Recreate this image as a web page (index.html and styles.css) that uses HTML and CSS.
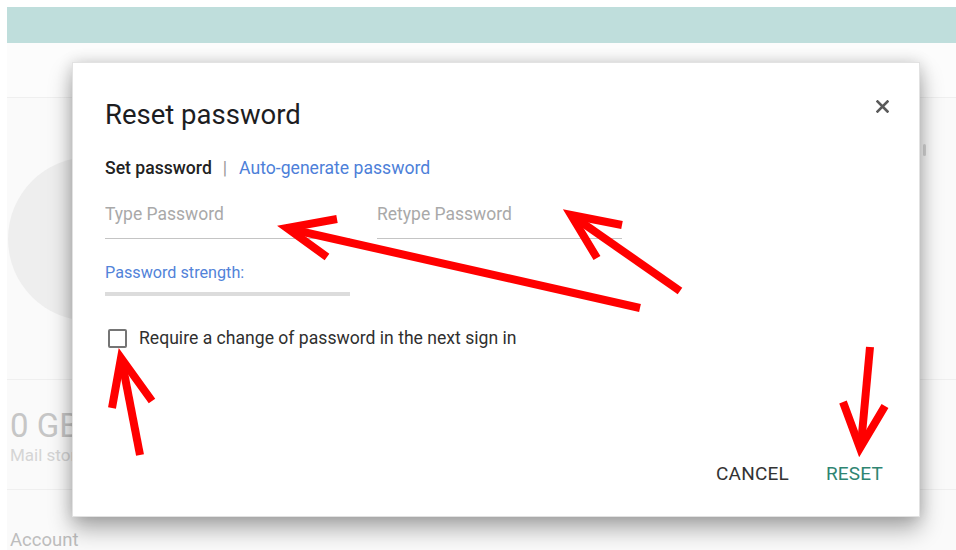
FILE: index.html
```html
<!DOCTYPE html>
<html lang="en">
<head>
<meta charset="utf-8">
<title>Reset password</title>
<link rel="stylesheet" href="styles.css">
</head>
<body>
<div class="page">
  <header class="topbar"></header>
  <main class="content">
    <section class="band band-top"></section>
    <section class="band band-profile">
      <div class="avatar"></div>
      <span class="more-dot"></span>
    </section>
    <section class="band band-storage">
      <div class="storage-value">0 GB</div>
      <div class="storage-label">Mail storage</div>
    </section>
    <section class="band band-account">
      <div class="account-title">Account</div>
    </section>
  </main>

  <div class="dialog" role="dialog" aria-labelledby="dlg-title">
    <div class="dialog-head">
      <h2 class="dialog-title" id="dlg-title">Reset password</h2>
      <button class="close" aria-label="Close">
        <svg width="13" height="13" viewBox="0 0 13 13"><path d="M1.5 1.5 L11.5 11.5 M11.5 1.5 L1.5 11.5" stroke="#5a5a5a" stroke-width="2.6" stroke-linecap="square"/></svg>
      </button>
    </div>
    <div class="tabs">
      <span class="tab tab-active">Set password</span>
      <span class="tab-sep">|</span>
      <span class="tab tab-link">Auto-generate password</span>
    </div>
    <div class="fields">
      <label class="field"><input type="password" placeholder="Type Password"></label>
      <label class="field"><input type="password" placeholder="Retype Password"></label>
    </div>
    <div class="strength">
      <div class="strength-label">Password strength:</div>
      <div class="strength-bar"></div>
    </div>
    <label class="check-row">
      <span class="checkbox"></span>
      <span class="check-text">Require a change of password in the next sign in</span>
    </label>
    <div class="actions">
      <button class="btn btn-cancel">CANCEL</button>
      <button class="btn btn-reset">RESET</button>
    </div>
  </div>

  <svg class="marks" width="956" height="550" viewBox="0 0 956 550" aria-hidden="true">
    <g stroke="#f00" stroke-width="8" stroke-linecap="butt" stroke-linejoin="miter" fill="none">
      <path d="M640 308 L290 229"/>
      <path d="M337 219 L287 228 L327 257"/>
      <path d="M680 291 L574 217"/>
      <path d="M622 225 L571 215 L597 258"/>
      <path d="M140 455 L122 362"/>
      <path d="M112 408 L121 358 L152 401"/>
      <path d="M870 347 L861 445"/>
      <path d="M843 402 L860 448 L885 406"/>
    </g>
  </svg>
</div>
</body>
</html>
```

FILE: styles.css
```css
* { box-sizing: border-box; }

html, body {
  margin: 0;
  padding: 0;
  background: #ffffff;
  font-family: Roboto, "Liberation Sans", Arial, sans-serif;
}

.page {
  position: relative;
  width: 956px;
  height: 550px;
  padding: 7px 0 0 7px;
  overflow: hidden;
}

.topbar {
  height: 36px;
  background: #bfdedc;
}

.content {
  display: flex;
  flex-direction: column;
  background: #fafafa;
}

.band { border-bottom: 1px solid #efefef; }

.band-top {
  height: 55px;
  background: #fcfcfc;
}

.band-profile {
  position: relative;
  height: 282px;
  display: flex;
  align-items: center;
  padding-left: 1px;
}

.avatar {
  width: 164px;
  height: 164px;
  border-radius: 50%;
  background: #eeeeee;
}

.more-dot {
  position: absolute;
  right: 30px;
  top: 46px;
  width: 3px;
  height: 12px;
  border-radius: 2px;
  background: #d6d6d6;
}

.band-storage {
  height: 110px;
  padding: 28px 0 0 3px;
}

.storage-value {
  font-size: 33px;
  line-height: 36px;
  color: #c6c6c6;
}

.storage-label {
  margin-top: 1px;
  font-size: 17px;
  line-height: 20px;
  color: #d5d5d5;
}

.band-account {
  height: 60px;
  border-bottom: none;
  padding: 39px 0 0 3px;
}

.account-title {
  font-size: 18.5px;
  line-height: 22px;
  color: #bdbdbd;
}

/* dialog */
.dialog {
  position: absolute;
  left: 72px;
  top: 62px;
  width: 848px;
  height: 455px;
  display: flex;
  flex-direction: column;
  padding: 36px 36px 31px 32px;
  background: #ffffff;
  border: 1px solid #e2e2e2;
  box-shadow: 0 12px 22px rgba(0, 0, 0, 0.32), 0 0 14px rgba(0, 0, 0, 0.14);
}

.dialog-head {
  display: flex;
  justify-content: space-between;
  align-items: flex-start;
}

.dialog-title {
  margin: 0;
  font-size: 27.5px;
  line-height: 32px;
  font-weight: 400;
  color: #1d1d1f;
}

.close {
  margin-top: 1px;
  margin-right: -6px;
  padding: 0;
  width: 13px;
  height: 13px;
  border: 0;
  background: none;
  display: flex;
}

.tabs {
  margin-top: 26px;
  display: flex;
  align-items: center;
  font-size: 17.6px;
  line-height: 22px;
}

.tab-active { color: #222; font-weight: 500; }
.tab-sep { margin: 0 12px 0 11px; color: #9a9a9a; }
.tab-link { color: #4d7fd9; }

.fields {
  margin-top: 24px;
  display: grid;
  grid-template-columns: 245px 245px;
  column-gap: 27px;
}

.field { display: block; }

.field input {
  display: block;
  width: 100%;
  height: 36px;
  padding: 0 0 13px;
  border: 0;
  border-bottom: 1px solid #c4c4c4;
  outline: none;
  font-family: inherit;
  font-size: 17.5px;
  line-height: 22px;
  background: transparent;
}

.field input::placeholder { color: #a9a9a9; }

.strength { margin-top: 24px; width: 245px; }

.strength-label {
  font-size: 16.2px;
  line-height: 20px;
  color: #5283d9;
}

.strength-bar {
  margin-top: 9px;
  height: 4px;
  background: #dcdcdc;
}

.check-row {
  margin-top: 31px;
  display: flex;
  align-items: center;
  gap: 12px;
  padding-left: 3px;
}

.checkbox {
  width: 19px;
  height: 19px;
  border: 2px solid #757575;
  border-radius: 2px;
}

.check-text {
  font-size: 17.6px;
  line-height: 22px;
  color: #2f2f2f;
}

.actions {
  margin-top: auto;
  display: flex;
  justify-content: flex-end;
  gap: 37px;
}

.btn {
  padding: 0;
  border: 0;
  background: none;
  font-family: inherit;
  font-size: 19px;
  line-height: 22px;
  font-weight: 400;
  letter-spacing: 0.2px;
}

.btn-cancel { color: #333333; }
.btn-reset { color: #2f8572; }

/* red callouts drawn over the form */
.marks {
  position: absolute;
  left: 0;
  top: 0;
  pointer-events: none;
}
```
